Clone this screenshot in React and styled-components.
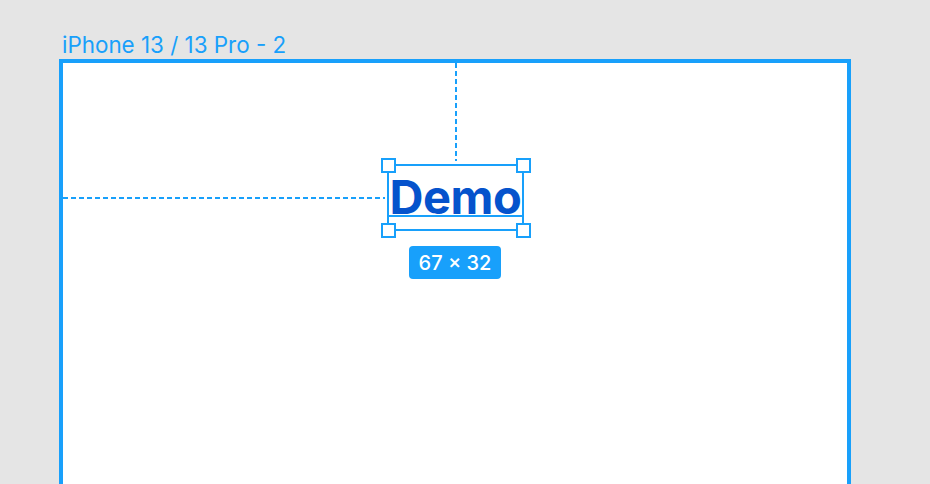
import { createGlobalStyle } from 'styled-components';
import styled from 'styled-components';

const FIGMA_BLUE = '#18a0fb';

const GlobalStyle = createGlobalStyle`
  html, body {
    margin: 0;
    padding: 0;
    background: #e5e5e5;
    overflow: hidden;
  }
  body {
    font-family: Inter, "Noto Sans", sans-serif;
  }
`;

const Canvas = styled.div`
  width: 930px;
  height: 484px;
  padding: 32px 0 0 59px;
  box-sizing: border-box;
  overflow: hidden;
`;

const FrameLabel = styled.div`
  margin-left: 3px;
  font-size: 22.4px;
  line-height: 26px;
  color: ${FIGMA_BLUE};
`;

const Frame = styled.div`
  position: relative;
  margin-top: 1px;
  width: 792px;
  height: 440px;
  box-sizing: border-box;
  border: 4px solid ${FIGMA_BLUE};
  border-bottom: none;
  background: #fff;
`;

const Guide = styled.div`
  position: absolute;
  left: ${(p) => p.$x}px;
  top: ${(p) => p.$y}px;
  width: ${(p) => (p.$vertical ? 2 : p.$length)}px;
  height: ${(p) => (p.$vertical ? p.$length : 2)}px;
  background: ${(p) =>
    `repeating-linear-gradient(${p.$vertical ? '180deg' : '90deg'}, ${FIGMA_BLUE} 0 5px, transparent 5px 8px)`};
`;

const Selection = styled.div`
  position: absolute;
  left: 324px;
  top: 101px;
  width: 137px;
  height: 67px;
  box-sizing: border-box;
  border: 2px solid ${FIGMA_BLUE};
  display: flex;
  align-items: flex-start;
  justify-content: center;
  padding-top: 13px;
`;

const DemoText = styled.span`
  font-family: Inter, "Liberation Sans", sans-serif;
  font-weight: 700;
  font-size: 47px;
  line-height: 36px;
  height: 36px;
  color: #0553cc;
  letter-spacing: -0.4px;
  border-bottom: 2px solid ${FIGMA_BLUE};
  white-space: nowrap;
`;

const Handle = styled.div`
  position: absolute;
  width: 15px;
  height: 15px;
  box-sizing: border-box;
  background: #fff;
  border: 2px solid ${FIGMA_BLUE};
  ${(p) => (p.$top ? 'top: -8.5px;' : 'bottom: -8.5px;')}
  ${(p) => (p.$left ? 'left: -8.5px;' : 'right: -8.5px;')}
`;

const SizeBadge = styled.div`
  position: absolute;
  left: 346px;
  top: 183px;
  width: 92px;
  height: 33px;
  border-radius: 4px;
  background: ${FIGMA_BLUE};
  color: #fff;
  font-size: 20px;
  font-weight: 500;
  display: flex;
  align-items: center;
  justify-content: center;
`;

export default function App() {
  return (
    <>
      <GlobalStyle />
      <Canvas>
        <FrameLabel>iPhone 13 / 13 Pro - 2</FrameLabel>
        <Frame>
          <Guide $vertical $x={392} $y={0} $length={98} />
          <Guide $x={0} $y={134} $length={322} />
          <Selection>
            <DemoText>Demo</DemoText>
            <Handle $top $left />
            <Handle $top />
            <Handle $left />
            <Handle />
          </Selection>
          <SizeBadge>67 × 32</SizeBadge>
        </Frame>
      </Canvas>
    </>
  );
}
